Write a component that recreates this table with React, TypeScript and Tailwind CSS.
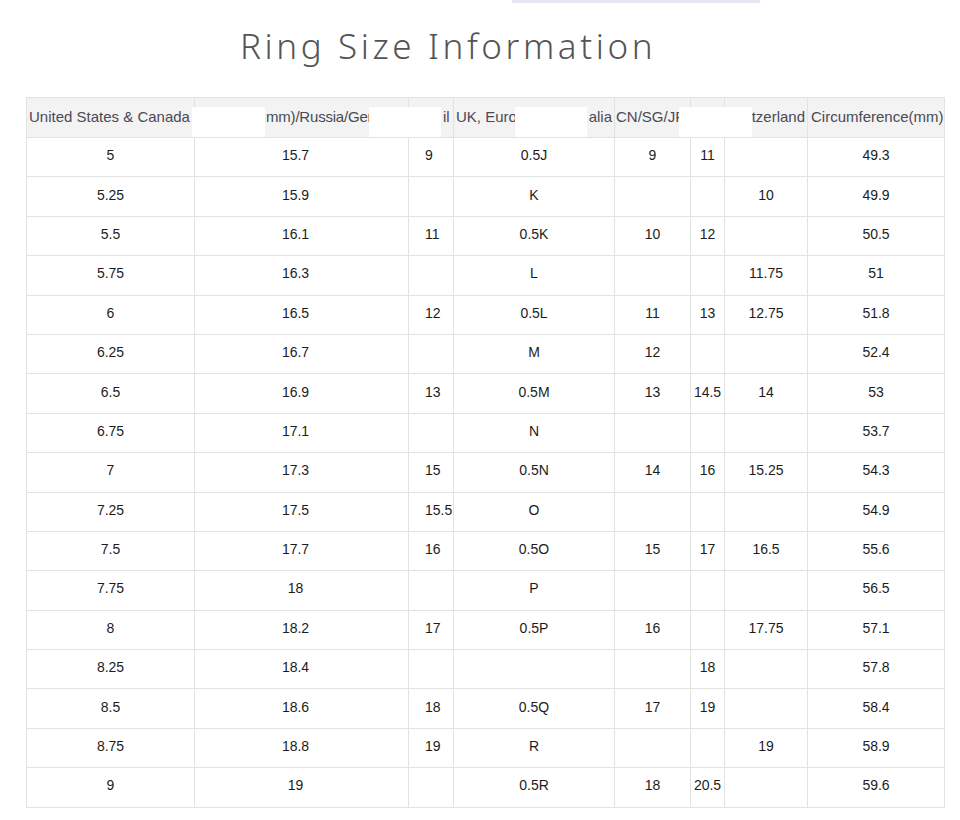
const COLS = [168, 214, 45, 161, 76, 34, 83, 137]

const ROWS: string[][] = [
  ["5", "15.7", "9", "0.5J", "9", "11", "", "49.3"],
  ["5.25", "15.9", "", "K", "", "", "10", "49.9"],
  ["5.5", "16.1", "11", "0.5K", "10", "12", "", "50.5"],
  ["5.75", "16.3", "", "L", "", "", "11.75", "51"],
  ["6", "16.5", "12", "0.5L", "11", "13", "12.75", "51.8"],
  ["6.25", "16.7", "", "M", "12", "", "", "52.4"],
  ["6.5", "16.9", "13", "0.5M", "13", "14.5", "14", "53"],
  ["6.75", "17.1", "", "N", "", "", "", "53.7"],
  ["7", "17.3", "15", "0.5N", "14", "16", "15.25", "54.3"],
  ["7.25", "17.5", "15.5", "O", "", "", "", "54.9"],
  ["7.5", "17.7", "16", "0.5O", "15", "17", "16.5", "55.6"],
  ["7.75", "18", "", "P", "", "", "", "56.5"],
  ["8", "18.2", "17", "0.5P", "16", "", "17.75", "57.1"],
  ["8.25", "18.4", "", "", "", "18", "", "57.8"],
  ["8.5", "18.6", "18", "0.5Q", "17", "19", "", "58.4"],
  ["8.75", "18.8", "19", "R", "", "", "19", "58.9"],
  ["9", "19", "", "0.5R", "18", "20.5", "", "59.6"],
]

// white patches that hide parts of the header
const PATCHES = [
  { left: 166, width: 73 },
  { left: 343, width: 72 },
  { left: 489, width: 72 },
  { left: 653, width: 73 },
]

const cellAlign = (i: number) => {
  if (i === 1) return "text-center pr-3"
  if (i === 2) return "text-left pl-4"
  return "text-center"
}

export default function App() {
  return (
    <div className="relative h-[820px] w-[960px] overflow-hidden bg-white font-['Liberation_Sans',Arial,sans-serif]">
      <div className="ml-[512px] h-[3px] w-[248px] bg-[#e6e6f2]" />
      <h1 className="pl-[240px] pt-[20px] font-['Noto_Sans',sans-serif] text-[35px] leading-[46px] font-light tracking-[3.6px] text-[#555]">
        Ring Size Information
      </h1>

      <div className="relative mt-[28px] ml-[26px] w-[918px]">
        <table className="w-[918px] table-fixed border-collapse text-[14px] text-[#1c1c1c]">
          <colgroup>
            {COLS.map((w, i) => (
              <col key={i} style={{ width: w }} />
            ))}
          </colgroup>
          <thead>
            <tr className="h-[40px] bg-[#f3f3f3] text-[15px] text-[#4a4a55]">
              <th className="overflow-hidden border border-[#e2e2e2] pl-[2px] text-left font-normal whitespace-nowrap">
                United States &amp; Canada
              </th>
              <th className="border border-[#e2e2e2] pl-[71px] text-left font-normal tracking-[-0.2px] whitespace-nowrap">
                mm)/Russia/Ger
              </th>
              <th className="overflow-hidden border border-[#e2e2e2] pl-[34px] text-left font-normal whitespace-nowrap">
                il
              </th>
              <th className="overflow-hidden border border-[#e2e2e2] px-[2px] font-normal whitespace-nowrap">
                <div className="flex justify-between">
                  <span>UK, Euro</span>
                  <span>alia</span>
                </div>
              </th>
              <th className="overflow-hidden border border-[#e2e2e2] pl-[1px] text-left font-normal whitespace-nowrap">
                CN/SG/JP
              </th>
              <th className="border border-[#e2e2e2]" />
              <th className="overflow-hidden border border-[#e2e2e2] pr-[2px] text-right font-normal whitespace-nowrap">
                tzerland
              </th>
              <th className="overflow-hidden border border-[#e2e2e2] pl-[3px] text-left font-normal whitespace-nowrap">
                Circumference(mm)
              </th>
            </tr>
          </thead>
          <tbody>
            {ROWS.map((row, r) => (
              <tr key={r} className="h-[39.4px]">
                {row.map((v, i) => (
                  <td key={i} className={`border border-[#e2e2e2] pb-[3px] ${cellAlign(i)}`}>
                    {v}
                  </td>
                ))}
              </tr>
            ))}
          </tbody>
        </table>

        {PATCHES.map((p) => (
          <div
            key={p.left}
            className="absolute top-[10px] h-[30px] bg-white"
            style={{ left: p.left, width: p.width }}
          />
        ))}
      </div>
    </div>
  )
}
